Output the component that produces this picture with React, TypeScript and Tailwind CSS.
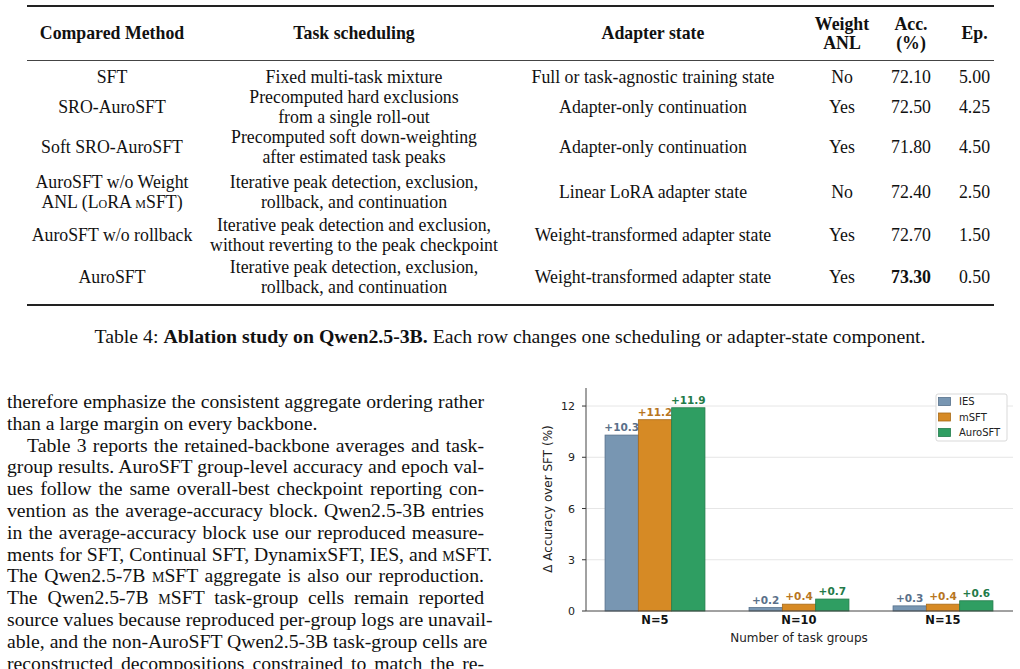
import React from 'react';

const serif = '[font-family:Liberation_Serif,serif]';

const Sc = ({ children }: { children: React.ReactNode }) => (
  <span className="[font-variant:small-caps]">{children}</span>
);

type Row = {
  method: React.ReactNode;
  sched: React.ReactNode;
  adapter: string;
  anl: string;
  acc: string;
  ep: string;
  bold?: boolean;
  pad: string;
};

const rows: Row[] = [
  { method: 'SFT', sched: 'Fixed multi-task mixture', adapter: 'Full or task-agnostic training state', anl: 'No', acc: '72.10', ep: '5.00', pad: 'pt-[5px] h-[26px]' },
  { method: 'SRO-AuroSFT', sched: <>Precomputed hard exclusions<br />from a single roll-out</>, adapter: 'Adapter-only continuation', anl: 'Yes', acc: '72.50', ep: '4.25', pad: 'h-[40px]' },
  { method: 'Soft SRO-AuroSFT', sched: <>Precomputed soft down-weighting<br />after estimated task peaks</>, adapter: 'Adapter-only continuation', anl: 'Yes', acc: '71.80', ep: '4.50', pad: 'h-[40px]' },
  { method: <>AuroSFT w/o Weight<br />ANL (L<Sc>o</Sc>RA <Sc>m</Sc>SFT)</>, sched: <>Iterative peak detection, exclusion,<br />rollback, and continuation</>, adapter: 'Linear LoRA adapter state', anl: 'No', acc: '72.40', ep: '2.50', pad: 'pt-[5px] h-[45px]' },
  { method: 'AuroSFT w/o rollback', sched: <>Iterative peak detection and exclusion,<br />without reverting to the peak checkpoint</>, adapter: 'Weight-transformed adapter state', anl: 'Yes', acc: '72.70', ep: '1.50', pad: 'pt-[3px] h-[43px]' },
  { method: 'AuroSFT', sched: <>Iterative peak detection, exclusion,<br />rollback, and continuation</>, adapter: 'Weight-transformed adapter state', anl: 'Yes', acc: '73.30', ep: '0.50', bold: true, pad: 'pt-[2px] h-[42px]' },
];

const cols = 'grid grid-cols-[170px_314px_284px_94px_44px_61px]';

const Cell = ({ children, className = '' }: { children: React.ReactNode; className?: string }) => (
  <div className={`flex items-center justify-center whitespace-nowrap ${className}`}>
    <div>{children}</div>
  </div>
);

function AblationTable() {
  return (
    <div className={`ml-[27px] mt-[5px] w-[967px] text-[17.8px] leading-[20px] text-[#111] ${serif}`}>
      <div className="border-t-2 border-[#222]" />
      <div className={`${cols} h-[53px] items-center text-center font-bold leading-[19px]`}>
        <div>Compared Method</div>
        <div>Task scheduling</div>
        <div>Adapter state</div>
        <div>Weight<br />ANL</div>
        <div>Acc.<br />(%)</div>
        <div className="pl-[22px]">Ep.</div>
      </div>
      <div className="border-t border-[#444]" />
      {rows.map((r, i) => (
        <div key={i} className={`${cols} text-center ${r.pad}`}>
          <Cell>{r.method}</Cell>
          <Cell>{r.sched}</Cell>
          <Cell>{r.adapter}</Cell>
          <Cell>{r.anl}</Cell>
          <Cell className={r.bold ? 'font-bold' : ''}>{r.acc}</Cell>
          <Cell className="pl-[22px]">{r.ep}</Cell>
        </div>
      ))}
      <div className="h-[7px]" />
      <div className="border-t-2 border-[#222]" />
    </div>
  );
}

const J = ({ children, indent }: { children: React.ReactNode; indent?: boolean }) => (
  <div className={`text-justify [text-align-last:justify] whitespace-nowrap ${indent ? 'pl-[20px]' : ''}`}>{children}</div>
);

function BodyText() {
  return (
    <div className={`ml-[7px] w-[477px] shrink-0 pt-[14px] text-[19.7px] leading-[21.8px] text-[#111] ${serif}`}>
      <J>therefore emphasize the consistent aggregate ordering rather</J>
      <div>than a large margin on every backbone.</div>
      <J indent>Table 3 reports the retained-backbone averages and task-</J>
      <J>group results. AuroSFT group-level accuracy and epoch val-</J>
      <J>ues follow the same overall-best checkpoint reporting con-</J>
      <J>vention as the average-accuracy block. Qwen2.5-3B entries</J>
      <J>in the average-accuracy block use our reproduced measure-</J>
      <J>ments for SFT, Continual SFT, DynamixSFT, IES, and <Sc>m</Sc>SFT.</J>
      <J>The Qwen2.5-7B <Sc>m</Sc>SFT aggregate is also our reproduction.</J>
      <J>The Qwen2.5-7B <Sc>m</Sc>SFT task-group cells remain reported</J>
      <J>source values because reproduced per-group logs are unavail-</J>
      <J>able, and the non-AuroSFT Qwen2.5-3B task-group cells are</J>
      <J>reconstructed decompositions constrained to match the re-</J>
    </div>
  );
}

const series = [
  { name: 'IES', fill: '#7896b2', stroke: '#56708a', label: '#5a7089', vals: [10.3, 0.2, 0.3] },
  { name: 'mSFT', fill: '#d68a25', stroke: '#a86a18', label: '#b8761f', vals: [11.2, 0.4, 0.4] },
  { name: 'AuroSFT', fill: '#2f9e62', stroke: '#247c4c', label: '#237a48', vals: [11.9, 0.7, 0.6] },
];
const groups = ['N=5', 'N=10', 'N=15'];

function Chart() {
  const x0 = 76;
  const yZero = 231;
  const unit = 17.08;
  const bw = 33.3;
  const centers = [145, 289, 433];
  return (
    <svg width={510} height={289} className="ml-[26px] mt-[3px] shrink-0" fontFamily="'DejaVu Sans', Verdana, sans-serif">
      {[0, 3, 6, 9, 12].map((t) => {
        const y = yZero - t * unit;
        return (
          <g key={t}>
            {t > 0 && <line x1={x0} x2={503} y1={y} y2={y} stroke="#e6e6e6" strokeWidth={1} />}
            <line x1={x0 - 4} x2={x0} y1={y} y2={y} stroke="#333" strokeWidth={1} />
            <text x={x0 - 11} y={y + 4} fontSize={11} textAnchor="end" fill="#222">{t}</text>
          </g>
        );
      })}
      {series.map((s, si) =>
        s.vals.map((v, gi) => {
          const x = centers[gi] - 1.5 * bw + si * bw;
          const h = v * unit;
          return (
            <g key={`${si}-${gi}`}>
              <rect x={x} y={yZero - h} width={bw} height={h} fill={s.fill} stroke={s.stroke} strokeWidth={0.8} />
              <text x={x + bw / 2} y={yZero - h - 4} fontSize={10.5} fontWeight="bold" textAnchor="middle" fill={s.label}>+{v.toFixed(1)}</text>
            </g>
          );
        })
      )}
      <line x1={x0} x2={x0} y1={8} y2={yZero} stroke="#444" strokeWidth={1} />
      <line x1={x0} x2={503} y1={yZero} y2={yZero} stroke="#444" strokeWidth={1} />
      {groups.map((g, gi) => (
        <text key={g} x={centers[gi]} y={244} fontSize={11.5} fontWeight="bold" textAnchor="middle" fill="#111">{g}</text>
      ))}
      <text x={289} y={262} fontSize={12} textAnchor="middle" fill="#222">Number of task groups</text>
      <text transform="translate(42 119) rotate(-90)" fontSize={12} textAnchor="middle" fill="#222">Δ Accuracy over SFT (%)</text>
      <rect x={426} y={14} width={71} height={47} rx={2} fill="#fff" stroke="#d9d9d9" strokeWidth={1} />
      {series.map((s, si) => (
        <g key={s.name}>
          <rect x={428.5} y={17.5 + si * 15.5} width={12} height={8} fill={s.fill} stroke={s.stroke} strokeWidth={0.8} />
          <text x={449} y={25 + si * 15.5} fontSize={10} fill="#222">{s.name}</text>
        </g>
      ))}
    </svg>
  );
}

export default function App() {
  return (
    <div className="w-[1020px] h-[669px] overflow-hidden bg-white">
      <AblationTable />
      <p className={`mt-[19px] text-center text-[19.8px] leading-[22px] text-[#111] ${serif}`}>
        Table 4: <b>Ablation study on Qwen2.5-3B.</b> Each row changes one scheduling or adapter-state component.
      </p>
      <div className="mt-[30px] flex items-start">
        <BodyText />
        <Chart />
      </div>
    </div>
  );
}
